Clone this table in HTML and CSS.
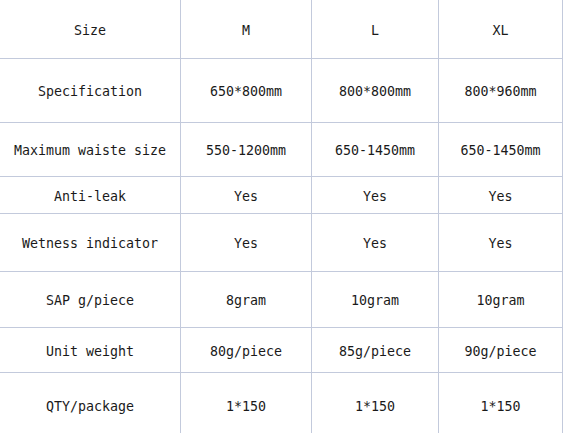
FILE: index.html
```html
<!DOCTYPE html>
<html lang="en">
<head>
<meta charset="utf-8">
<title>Size specification</title>
<link rel="stylesheet" href="styles.css">
</head>
<body>
<div class="spec-table">
  <div class="cell">Size</div><div class="cell">M</div><div class="cell">L</div><div class="cell">XL</div>
  <div class="cell">Specification</div><div class="cell">650*800mm</div><div class="cell">800*800mm</div><div class="cell">800*960mm</div>
  <div class="cell">Maximum waiste size</div><div class="cell">550-1200mm</div><div class="cell">650-1450mm</div><div class="cell">650-1450mm</div>
  <div class="cell">Anti-leak</div><div class="cell">Yes</div><div class="cell">Yes</div><div class="cell">Yes</div>
  <div class="cell">Wetness indicator</div><div class="cell">Yes</div><div class="cell">Yes</div><div class="cell">Yes</div>
  <div class="cell">SAP g/piece</div><div class="cell">8gram</div><div class="cell">10gram</div><div class="cell">10gram</div>
  <div class="cell">Unit weight</div><div class="cell">80g/piece</div><div class="cell">85g/piece</div><div class="cell">90g/piece</div>
  <div class="cell">QTY/package</div><div class="cell">1*150</div><div class="cell">1*150</div><div class="cell">1*150</div>
</div>
</body>
</html>
```
FILE: styles.css
```css
html, body {
  margin: 0;
  padding: 0;
  background: #ffffff;
  overflow: hidden;
}
.spec-table {
  display: grid;
  grid-template-columns: 180px 130px 126px 123px;
  grid-template-rows: 58px 63px 53px 36px 57px 55px 44px 64px;
  gap: 1px;
  width: 563px;
  padding-right: 1px;
  padding-bottom: 1px;
  box-sizing: border-box;
  background: #c3cadc;
  font-family: "DejaVu Sans Mono", "Liberation Mono", monospace;
  font-size: 13.3px;
  color: #1a1a1a;
}
.cell {
  background: #ffffff;
  display: flex;
  align-items: center;
  justify-content: center;
  padding-top: 2px;
  box-sizing: border-box;
  white-space: nowrap;
}
```
